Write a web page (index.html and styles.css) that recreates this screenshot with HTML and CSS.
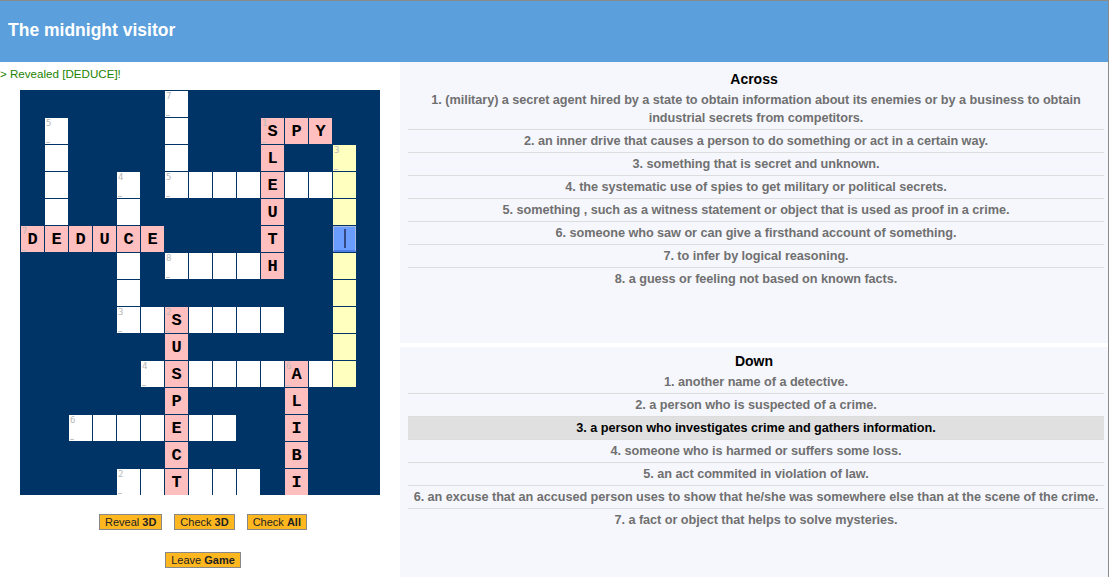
FILE: index.html
```html
<!DOCTYPE html>
<html lang="en">
<head>
<meta charset="utf-8">
<title>The midnight visitor</title>
<link rel="stylesheet" href="styles.css">
</head>
<body>
<div class="page">
  <header class="topbar"><h1 class="title">The midnight visitor</h1></header>
  <main class="main">
    <section class="left">
      <div class="status">&gt; Revealed [DEDUCE]!</div>
      <div class="grid">
        <!-- row 0 -->
        <div class="k"></div><div class="k"></div><div class="k"></div><div class="k"></div><div class="k"></div><div class="k"></div><div class="c w"><span class="n">7</span></div><div class="k"></div><div class="k"></div><div class="k"></div><div class="k"></div><div class="k"></div><div class="k"></div><div class="k"></div><div class="k"></div>
        <!-- row 1 -->
        <div class="k"></div><div class="c w"><span class="n">5</span></div><div class="k"></div><div class="k"></div><div class="k"></div><div class="k"></div><div class="c w"></div><div class="k"></div><div class="k"></div><div class="k"></div><div class="c r"><span class="n">1</span>S</div><div class="c r">P</div><div class="c r">Y</div><div class="k"></div><div class="k"></div>
        <!-- row 2 -->
        <div class="k"></div><div class="c w"></div><div class="k"></div><div class="k"></div><div class="k"></div><div class="k"></div><div class="c w"></div><div class="k"></div><div class="k"></div><div class="k"></div><div class="c r">L</div><div class="k"></div><div class="k"></div><div class="c y"><span class="n">3</span></div><div class="k"></div>
        <!-- row 3 -->
        <div class="k"></div><div class="c w"></div><div class="k"></div><div class="k"></div><div class="c w"><span class="n">4</span></div><div class="k"></div><div class="c w"><span class="n">5</span></div><div class="c w"></div><div class="c w"></div><div class="c w"></div><div class="c r">E</div><div class="c w"></div><div class="c w"></div><div class="c y"></div><div class="k"></div>
        <!-- row 4 -->
        <div class="k"></div><div class="c w"></div><div class="k"></div><div class="k"></div><div class="c w"></div><div class="k"></div><div class="k"></div><div class="k"></div><div class="k"></div><div class="k"></div><div class="c r">U</div><div class="k"></div><div class="k"></div><div class="c y"></div><div class="k"></div>
        <!-- row 5 -->
        <div class="c r"><span class="n">7</span>D</div><div class="c r">E</div><div class="c r">D</div><div class="c r">U</div><div class="c r">C</div><div class="c r">E</div><div class="k"></div><div class="k"></div><div class="k"></div><div class="k"></div><div class="c r">T</div><div class="k"></div><div class="k"></div><div class="c a"><span class="cursor"></span></div><div class="k"></div>
        <!-- row 6 -->
        <div class="k"></div><div class="k"></div><div class="k"></div><div class="k"></div><div class="c w"></div><div class="k"></div><div class="c w"><span class="n">8</span></div><div class="c w"></div><div class="c w"></div><div class="c w"></div><div class="c r">H</div><div class="k"></div><div class="k"></div><div class="c y"></div><div class="k"></div>
        <!-- row 7 -->
        <div class="k"></div><div class="k"></div><div class="k"></div><div class="k"></div><div class="c w"></div><div class="k"></div><div class="k"></div><div class="k"></div><div class="k"></div><div class="k"></div><div class="k"></div><div class="k"></div><div class="k"></div><div class="c y"></div><div class="k"></div>
        <!-- row 8 -->
        <div class="k"></div><div class="k"></div><div class="k"></div><div class="k"></div><div class="c w"><span class="n">3</span></div><div class="c w"></div><div class="c r"><span class="n">2</span>S</div><div class="c w"></div><div class="c w"></div><div class="c w"></div><div class="c w"></div><div class="k"></div><div class="k"></div><div class="c y"></div><div class="k"></div>
        <!-- row 9 -->
        <div class="k"></div><div class="k"></div><div class="k"></div><div class="k"></div><div class="k"></div><div class="k"></div><div class="c r">U</div><div class="k"></div><div class="k"></div><div class="k"></div><div class="k"></div><div class="k"></div><div class="k"></div><div class="c y"></div><div class="k"></div>
        <!-- row 10 -->
        <div class="k"></div><div class="k"></div><div class="k"></div><div class="k"></div><div class="k"></div><div class="c w"><span class="n">4</span></div><div class="c r">S</div><div class="c w"></div><div class="c w"></div><div class="c w"></div><div class="c w"></div><div class="c r"><span class="n">6</span>A</div><div class="c w"></div><div class="c y"></div><div class="k"></div>
        <!-- row 11 -->
        <div class="k"></div><div class="k"></div><div class="k"></div><div class="k"></div><div class="k"></div><div class="k"></div><div class="c r">P</div><div class="k"></div><div class="k"></div><div class="k"></div><div class="k"></div><div class="c r">L</div><div class="k"></div><div class="k"></div><div class="k"></div>
        <!-- row 12 -->
        <div class="k"></div><div class="k"></div><div class="c w"><span class="n">6</span></div><div class="c w"></div><div class="c w"></div><div class="c w"></div><div class="c r">E</div><div class="c w"></div><div class="c w"></div><div class="k"></div><div class="k"></div><div class="c r">I</div><div class="k"></div><div class="k"></div><div class="k"></div>
        <!-- row 13 -->
        <div class="k"></div><div class="k"></div><div class="k"></div><div class="k"></div><div class="k"></div><div class="k"></div><div class="c r">C</div><div class="k"></div><div class="k"></div><div class="k"></div><div class="k"></div><div class="c r">B</div><div class="k"></div><div class="k"></div><div class="k"></div>
        <!-- row 14 -->
        <div class="k"></div><div class="k"></div><div class="k"></div><div class="k"></div><div class="c w"><span class="n">2</span></div><div class="c w"></div><div class="c r">T</div><div class="c w"></div><div class="c w"></div><div class="c w"></div><div class="k"></div><div class="c r">I</div><div class="k"></div><div class="k"></div><div class="k"></div>
      </div>
      <div class="buttons">
        <button class="btn">Reveal <b>3D</b></button>
        <button class="btn">Check <b>3D</b></button>
        <button class="btn">Check <b>All</b></button>
      </div>
      <div class="buttons leave">
        <button class="btn">Leave <b>Game</b></button>
      </div>
    </section>
    <section class="right">
      <div class="box across">
        <h2 class="heading">Across</h2>
        <ul class="clues">
          <li>1. (military) a secret agent hired by a state to obtain information about its enemies or by a business to obtain industrial secrets from competitors.</li>
          <li>2. an inner drive that causes a person to do something or act in a certain way.</li>
          <li>3. something that is secret and unknown.</li>
          <li>4. the systematic use of spies to get military or political secrets.</li>
          <li>5. something , such as a witness statement or object that is used as proof in a crime.</li>
          <li>6. someone who saw or can give a firsthand account of something.</li>
          <li>7. to infer by logical reasoning.</li>
          <li>8. a guess or feeling not based on known facts.</li>
        </ul>
      </div>
      <div class="box down">
        <h2 class="heading">Down</h2>
        <ul class="clues">
          <li>1. another name of a detective.</li>
          <li>2. a person who is suspected of a crime.</li>
          <li class="current">3. a person who investigates crime and gathers information.</li>
          <li>4. someone who is harmed or suffers some loss.</li>
          <li>5. an act commited in violation of law.</li>
          <li>6. an excuse that an accused person uses to show that he/she was somewhere else than at the scene of the crime.</li>
          <li>7. a fact or object that helps to solve mysteries.</li>
        </ul>
      </div>
    </section>
  </main>
</div>
</body>
</html>
```
FILE: styles.css
```css
* { box-sizing: border-box; }
html, body { margin: 0; padding: 0; }
body {
  font-family: "Liberation Sans", Arial, sans-serif;
  background: #ffffff;
  overflow: hidden;
}
.page {
  border-top: 1px solid #8a8a8a;
  border-right: 1px solid #8a8a8a;
  height: 577px;
  display: flex;
  flex-direction: column;
}
.topbar {
  background: #5ba0dc;
  height: 61px;
  flex: none;
  padding: 18px 8px 0;
}
.title {
  margin: 0;
  color: #ffffff;
  font-size: 17.5px;
  line-height: 22px;
  font-weight: bold;
}
.main {
  display: flex;
  flex: 1;
}
.left {
  width: 400px;
  flex: none;
}
.status {
  color: #1d8300;
  font-size: 11.6px;
  line-height: 14px;
  padding-top: 5px;
  height: 28px;
}
.grid {
  width: 360px;
  height: 405px;
  margin: 0 auto;
  background: #003366;
  display: grid;
  grid-template-columns: repeat(15, 23px);
  grid-template-rows: repeat(15, 26px);
  gap: 1px;
  padding: 1px 0 0 1px;
}
.c {
  position: relative;
  display: flex;
  align-items: center;
  justify-content: center;
  font-family: "Liberation Mono", "DejaVu Sans Mono", monospace;
  font-weight: bold;
  font-size: 17px;
  color: #000;
}
.w { background: #ffffff; }
.r { background: #ffbfbf; }
.y { background: #ffffc0; }
.a {
  background: #6b9cff;
  border: 1px solid #a7b9dc;
  border-bottom: 2px solid #4d7fe6;
}
.cursor {
  width: 2px;
  height: 19px;
  background: #354a85;
}
.n {
  position: absolute;
  left: 1px;
  top: 0;
  font-family: "DejaVu Sans Mono", monospace;
  font-weight: normal;
  font-size: 9px;
  line-height: 10px;
  color: #b8b8b8;
}
.n::after {
  content: "";
  position: absolute;
  left: 0;
  top: 24px;
  width: 4px;
  height: 1px;
  background: #c4c4c4;
}
.buttons {
  display: flex;
  justify-content: center;
  gap: 12px;
  margin-top: 19px;
  padding-left: 6px;
}
.buttons.leave {
  margin-top: 22px;
}
.btn {
  font-family: "Liberation Sans", Arial, sans-serif;
  font-size: 11px;
  line-height: 13px;
  height: 16px;
  padding: 0 5px;
  background: #ffb71f;
  color: #222;
  border: 1px solid #888888;
  border-radius: 0;
}
.btn b { font-weight: bold; }
.right {
  flex: 1;
  display: flex;
  flex-direction: column;
}
.box {
  background: #f6f7fd;
  text-align: center;
}
.across {
  height: 281px;
  flex: none;
  padding-top: 8px;
}
.down {
  margin-top: 4px;
  flex: 1;
  padding-top: 5px;
}
.heading {
  margin: 0 0 1px;
  font-size: 14px;
  line-height: 18px;
  font-weight: bold;
  color: #000;
}
.clues {
  list-style: none;
  margin: 0 4px 0 8px;
  padding: 0;
}
.clues li {
  font-family: "Liberation Sans", Arial, sans-serif;
  font-weight: bold;
  font-size: 12.7px;
  letter-spacing: -0.05px;
  line-height: 18px;
  padding: 2px 0;
  color: #707070;
  border-bottom: 1px solid #dddddd;
}
.clues li:last-child { border-bottom: none; }
.clues li.current {
  background: #e0e0e0;
  color: #000;
}
```
